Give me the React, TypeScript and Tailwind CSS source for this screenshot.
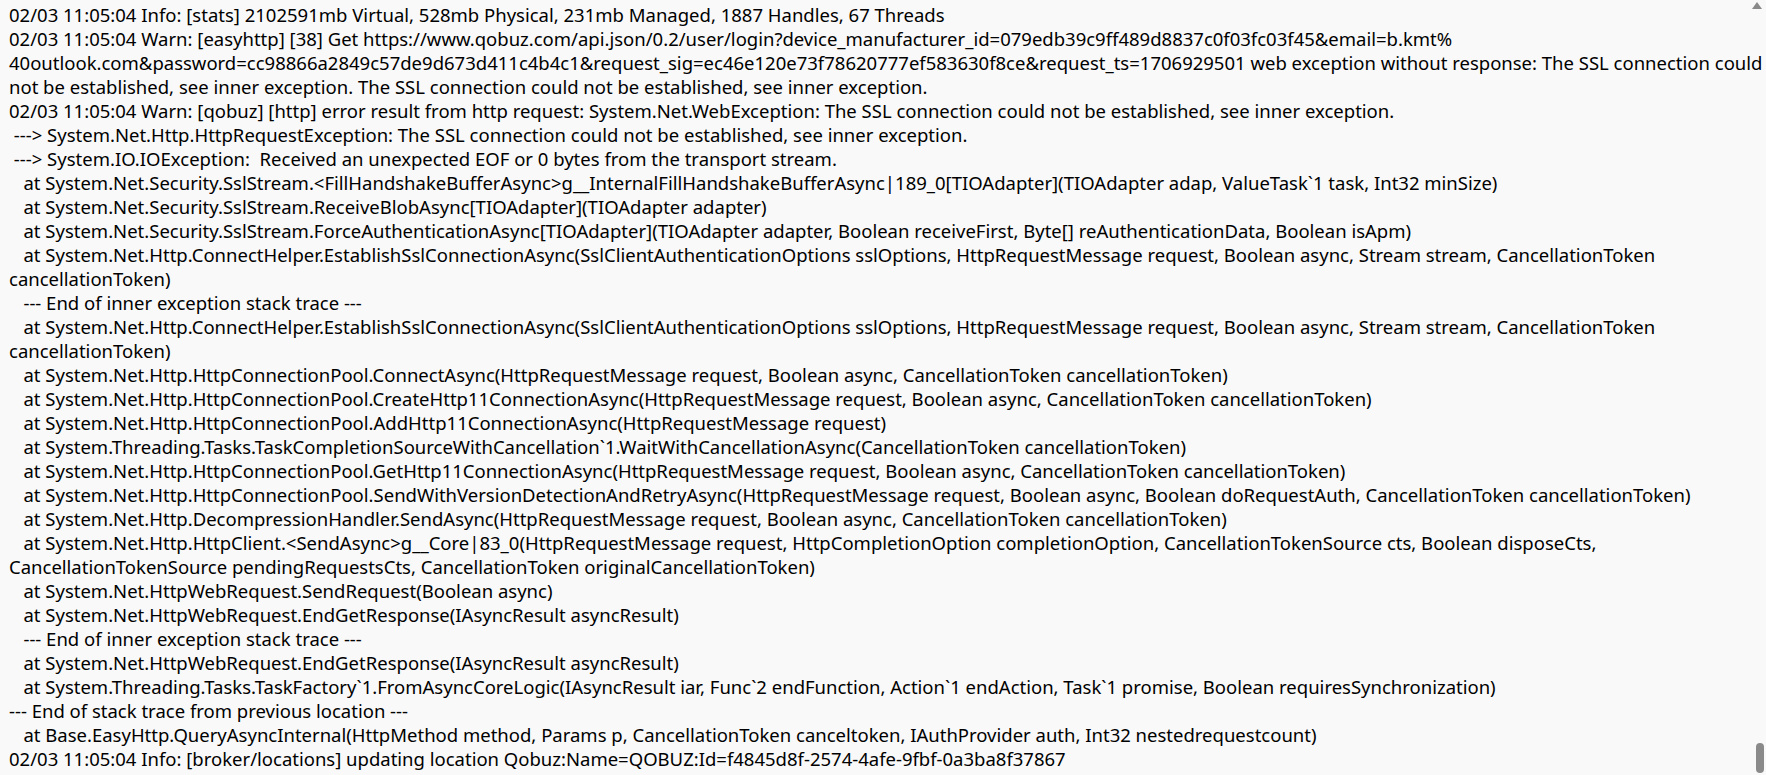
const LINES: string[] = [
  "02/03 11:05:04 Info: [stats] 2102591mb Virtual, 528mb Physical, 231mb Managed, 1887 Handles, 67 Threads",
  "02/03 11:05:04 Warn: [easyhttp] [38] Get https://www.qobuz.com/api.json/0.2/user/login?device_manufacturer_id=079edb39c9ff489d8837c0f03fc03f45&email=b.kmt%",
  "40outlook.com&password=cc98866a2849c57de9d673d411c4b4c1&request_sig=ec46e120e73f78620777ef583630f8ce&request_ts=1706929501 web exception without response: The SSL connection could",
  "not be established, see inner exception. The SSL connection could not be established, see inner exception.",
  "02/03 11:05:04 Warn: [qobuz] [http] error result from http request: System.Net.WebException: The SSL connection could not be established, see inner exception.",
  " ---> System.Net.Http.HttpRequestException: The SSL connection could not be established, see inner exception.",
  " ---> System.IO.IOException:  Received an unexpected EOF or 0 bytes from the transport stream.",
  "   at System.Net.Security.SslStream.<FillHandshakeBufferAsync>g__InternalFillHandshakeBufferAsync|189_0[TIOAdapter](TIOAdapter adap, ValueTask`1 task, Int32 minSize)",
  "   at System.Net.Security.SslStream.ReceiveBlobAsync[TIOAdapter](TIOAdapter adapter)",
  "   at System.Net.Security.SslStream.ForceAuthenticationAsync[TIOAdapter](TIOAdapter adapter, Boolean receiveFirst, Byte[] reAuthenticationData, Boolean isApm)",
  "   at System.Net.Http.ConnectHelper.EstablishSslConnectionAsync(SslClientAuthenticationOptions sslOptions, HttpRequestMessage request, Boolean async, Stream stream, CancellationToken",
  "cancellationToken)",
  "   --- End of inner exception stack trace ---",
  "   at System.Net.Http.ConnectHelper.EstablishSslConnectionAsync(SslClientAuthenticationOptions sslOptions, HttpRequestMessage request, Boolean async, Stream stream, CancellationToken",
  "cancellationToken)",
  "   at System.Net.Http.HttpConnectionPool.ConnectAsync(HttpRequestMessage request, Boolean async, CancellationToken cancellationToken)",
  "   at System.Net.Http.HttpConnectionPool.CreateHttp11ConnectionAsync(HttpRequestMessage request, Boolean async, CancellationToken cancellationToken)",
  "   at System.Net.Http.HttpConnectionPool.AddHttp11ConnectionAsync(HttpRequestMessage request)",
  "   at System.Threading.Tasks.TaskCompletionSourceWithCancellation`1.WaitWithCancellationAsync(CancellationToken cancellationToken)",
  "   at System.Net.Http.HttpConnectionPool.GetHttp11ConnectionAsync(HttpRequestMessage request, Boolean async, CancellationToken cancellationToken)",
  "   at System.Net.Http.HttpConnectionPool.SendWithVersionDetectionAndRetryAsync(HttpRequestMessage request, Boolean async, Boolean doRequestAuth, CancellationToken cancellationToken)",
  "   at System.Net.Http.DecompressionHandler.SendAsync(HttpRequestMessage request, Boolean async, CancellationToken cancellationToken)",
  "   at System.Net.Http.HttpClient.<SendAsync>g__Core|83_0(HttpRequestMessage request, HttpCompletionOption completionOption, CancellationTokenSource cts, Boolean disposeCts,",
  "CancellationTokenSource pendingRequestsCts, CancellationToken originalCancellationToken)",
  "   at System.Net.HttpWebRequest.SendRequest(Boolean async)",
  "   at System.Net.HttpWebRequest.EndGetResponse(IAsyncResult asyncResult)",
  "   --- End of inner exception stack trace ---",
  "   at System.Net.HttpWebRequest.EndGetResponse(IAsyncResult asyncResult)",
  "   at System.Threading.Tasks.TaskFactory`1.FromAsyncCoreLogic(IAsyncResult iar, Func`2 endFunction, Action`1 endAction, Task`1 promise, Boolean requiresSynchronization)",
  "--- End of stack trace from previous location ---",
  "   at Base.EasyHttp.QueryAsyncInternal(HttpMethod method, Params p, CancellationToken canceltoken, IAuthProvider auth, Int32 nestedrequestcount)",
  "02/03 11:05:04 Info: [broker/locations] updating location Qobuz:Name=QOBUZ:Id=f4845d8f-2574-4afe-9fbf-0a3ba8f37867",
];

export default function App() {
  return (
    <div className="relative h-[775px] w-full overflow-hidden bg-[#f9f9f9]">
      {/* log text */}
      <div className="pl-[9px] pt-[3px] font-['Noto_Sans',sans-serif] text-[18.5px] leading-[24px] text-[#000000]">
        {LINES.map((line, i) => (
          <div key={i} className="whitespace-pre">
            {line}
          </div>
        ))}
      </div>

      {/* scrollbar overlay */}
      <div className="absolute right-[4px] top-[2px] h-0 w-0 border-x-[5px] border-b-[7px] border-x-transparent border-b-[#8a8a8a]" />
      <div className="absolute bottom-[2px] right-[2px] h-[30px] w-[8px] rounded-full bg-[#8a8a8a]" />
    </div>
  );
}
